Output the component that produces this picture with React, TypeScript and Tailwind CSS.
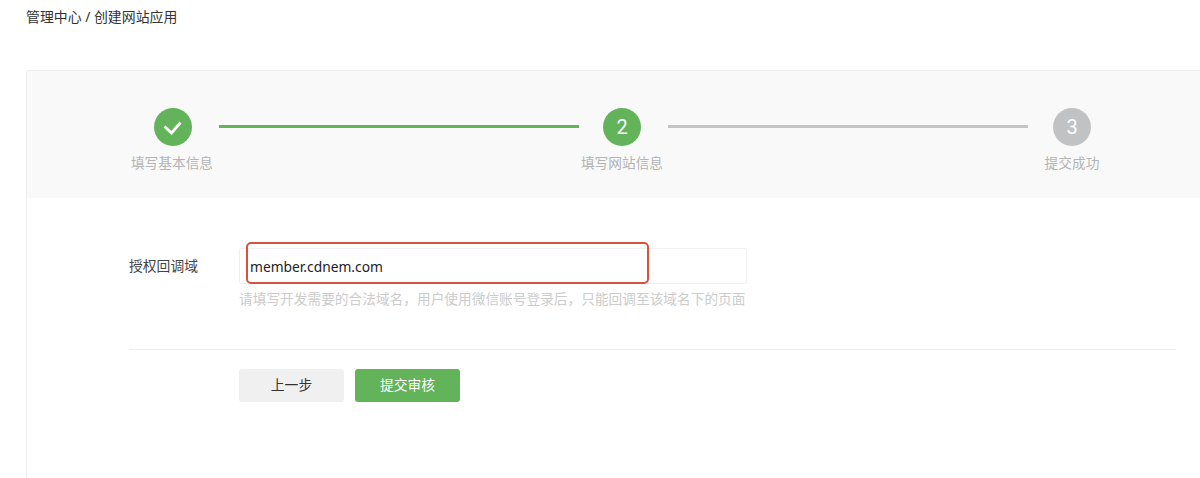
import React from 'react'

const Step = ({ label, active, className, labelClass, children }: any) => {
    return (
        <div className={`shrink-0 flex flex-col items-center ${className}`}>
            <div className={`w-[38px] h-[38px] rounded-full flex items-center justify-center text-white text-[20px] leading-none font-['Roboto',sans-serif] ${active ? 'bg-[#62b35a]' : 'bg-[#c1c2c4]'}`}>
                {children}
            </div>
            <span className={`mt-[6px] text-[13.7px] leading-[20px] text-[#b4b4b4] whitespace-nowrap font-['Noto_Sans_CJK_SC',sans-serif] ${labelClass}`}>{label}</span>
        </div>
    )
}

export default function App() {
    return (
        <div className="w-[1200px] h-[478px] overflow-hidden bg-white text-[#333] font-['Noto_Sans','Noto_Sans_CJK_SC',sans-serif]">
            <div className="pl-[26px] pt-[7px] h-[70px] text-[13.9px] leading-[20px]">管理中心 / 创建网站应用</div>

            <div className="ml-[26px] w-[1190px] h-[420px] border border-[#eeeeee] rounded-t-[2px]">
                <div className="h-[127px] bg-[#f9f9f9] pt-[37px] pl-[101px] flex items-start">
                    <Step label="填写基本信息" active className="w-[90px]" labelClass="mr-[2px]">
                        <svg viewBox="0 0 22 22" className="w-[22px] h-[22px]" fill="none" stroke="currentColor" strokeWidth="2.8">
                            <path d="M2.5 10.5 9.5 17 18.5 6.5" />
                        </svg>
                    </Step>
                    <div className="w-[360px] h-[3px] mt-[17px] ml-px bg-[#62b35a]" />
                    <Step label="填写网站信息" active className="w-[89px] pr-[3px]">2</Step>
                    <div className="w-[360px] h-[3px] mt-[17px] bg-[#c4c4c4]" />
                    <Step label="提交成功" className="w-[88px]">3</Step>
                </div>

                <div className="pl-[102px] pr-[39px] pt-[50px]">
                    <div className="flex items-start">
                        <label className="w-[110px] h-[36px] text-[13.8px] leading-[36px] text-[#444]">授权回调域</label>
                        <div className="relative">
                            <div className="w-[508px] h-[36px] border border-[#f0f0f0] rounded-[2px] bg-white" />
                            <div className="absolute left-[7px] top-[-6px] w-[403px] h-[42px] border-2 border-[#d9503f] rounded-[5px] pl-[2px] text-[13.8px] leading-[45px] text-[#222]">
                                member.cdnem.com
                            </div>
                            <p className="mt-[5px] text-[13.7px] leading-[20px] text-[#cccccc] whitespace-nowrap">请填写开发需要的合法域名，用户使用微信账号登录后，只能回调至该域名下的页面</p>
                        </div>
                    </div>

                    <div className="mt-[40px] h-px bg-[#eeeeee]" />

                    <div className="mt-[19px] ml-[110px] flex gap-[11px]">
                        <button className="w-[105px] h-[33px] rounded-[3px] bg-[#f0f0f0] text-[13.8px] text-[#333]">上一步</button>
                        <button className="w-[105px] h-[33px] rounded-[3px] bg-[#62b35a] text-[13.8px] text-white">提交审核</button>
                    </div>
                </div>
            </div>
        </div>
    )
}
